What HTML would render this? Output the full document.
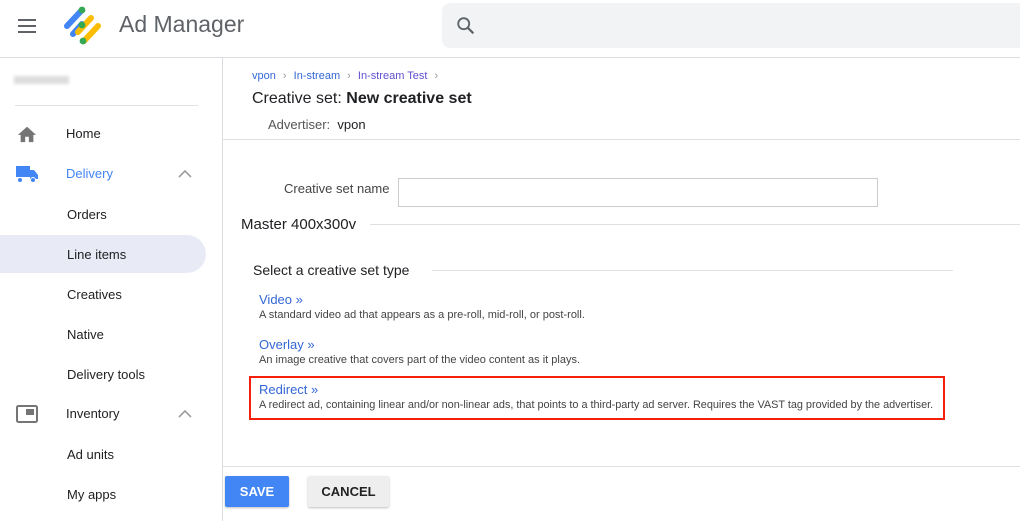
<!DOCTYPE html><html><head><style>
*{box-sizing:border-box;margin:0;padding:0}
body{width:1020px;height:521px;overflow:hidden;background:#fff;font-family:"Liberation Sans",Arial,sans-serif;color:#202124;position:relative}
.a{position:absolute;white-space:nowrap}
.nav{font-size:13px;color:#202124;left:66px}
.desc{font-size:11px;color:#444;left:259px}
.lk{font-size:13px;color:#3367d6;left:259px}
</style></head><body>
<div class="a" style="left:0;top:57px;width:1020px;border-top:1px solid #dadce0"></div>
<div class="a" style="left:18px;top:19px;width:18px;height:2px;background:#5f6368;box-shadow:0 6px 0 #5f6368,0 12px 0 #5f6368"></div>
<svg class="a" style="left:60px;top:4px" width="46" height="44" viewBox="0 0 46 44">
<line x1="22" y1="6" x2="7" y2="22" stroke="#4285f4" stroke-width="6" stroke-linecap="round"/>
<line x1="22" y1="20" x2="13" y2="30" stroke="#4285f4" stroke-width="6" stroke-linecap="round"/>
<line x1="31" y1="14" x2="18" y2="28" stroke="#fbbc04" stroke-width="6" stroke-linecap="round"/>
<line x1="38" y1="22" x2="24" y2="37" stroke="#fbbc04" stroke-width="6" stroke-linecap="round"/>
<circle cx="22" cy="6" r="3.4" fill="#34a853"/><circle cx="22" cy="21" r="3.4" fill="#34a853"/><circle cx="23" cy="37" r="3.4" fill="#34a853"/>
</svg>
<div class="a" style="left:119px;top:11px;font-size:23px;color:#5f6368">Ad Manager</div>
<div class="a" style="left:442px;top:3px;width:578px;height:45px;background:#f1f3f4;border-radius:8px 0 0 8px"></div>
<svg class="a" style="left:455px;top:15px" width="22" height="22" viewBox="0 0 24 24"><circle cx="9.5" cy="9.5" r="6" fill="none" stroke="#5f6368" stroke-width="2"/><line x1="14" y1="14" x2="20" y2="20" stroke="#5f6368" stroke-width="2.4"/></svg>
<div class="a" style="left:222px;top:57px;height:464px;border-left:1px solid #dadce0"></div>
<div class="a" style="left:14px;top:76px;width:55px;height:8px;background:#ddd;filter:blur(1.5px)"></div>
<div class="a" style="left:15px;top:105px;width:183px;border-top:1px solid #e0e0e0"></div>
<div class="a" style="left:0;top:235px;width:206px;height:38px;background:#e8eaf6;border-radius:0 19px 19px 0"></div>
<svg class="a" style="left:16px;top:124px" width="22" height="20" viewBox="0 0 24 22"><path d="M10 20v-6h4v6h5v-8h3L12 3 2 12h3v8z" fill="#757575"/></svg>
<svg class="a" style="left:15px;top:165px" width="24" height="18" viewBox="0 0 24 18"><path d="M1 1h14v11H1z M15 5h4l4 5v4h-8z" fill="#4285f4"/><circle cx="5" cy="15" r="2.5" fill="#4285f4" stroke="#fff"/><circle cx="18" cy="15" r="2.5" fill="#4285f4" stroke="#fff"/></svg>
<svg class="a" style="left:16px;top:405px" width="22" height="18" viewBox="0 0 22 18"><rect x="1" y="1" width="20" height="16" rx="1.5" fill="none" stroke="#757575" stroke-width="2"/><rect x="10" y="4" width="8" height="6" fill="#757575"/></svg>
<svg class="a" style="left:178px;top:169px" width="14" height="10"><path d="M1 8l6-6 6 6" fill="none" stroke="#9e9e9e" stroke-width="1.6"/></svg>
<svg class="a" style="left:178px;top:409px" width="14" height="10"><path d="M1 8l6-6 6 6" fill="none" stroke="#9e9e9e" stroke-width="1.6"/></svg>
<div class="a nav" style="top:126px">Home</div>
<div class="a nav" style="top:166px;color:#4285f4">Delivery</div>
<div class="a nav" style="top:207px;left:67px">Orders</div>
<div class="a nav" style="top:247px;left:67px">Line items</div>
<div class="a nav" style="top:287px;left:67px">Creatives</div>
<div class="a nav" style="top:327px;left:67px">Native</div>
<div class="a nav" style="top:367px;left:67px">Delivery tools</div>
<div class="a nav" style="top:406px">Inventory</div>
<div class="a nav" style="top:447px;left:67px">Ad units</div>
<div class="a nav" style="top:487px;left:67px">My apps</div>
<div class="a" style="left:252px;top:70px;font-size:11px;color:#3367d6">vpon <span style="color:#999;margin:0 4px">›</span> In-stream <span style="color:#999;margin:0 4px">›</span> <span style="color:#5e4fd0">In-stream Test</span> <span style="color:#999;margin:0 4px">›</span></div>
<div class="a" style="left:252px;top:90px;font-size:16px">Creative set: <b>New creative set</b></div>
<div class="a" style="left:268px;top:117px;font-size:13px;color:#555">Advertiser: <span style="color:#202124">&nbsp;vpon</span></div>
<div class="a" style="left:223px;top:139px;width:797px;border-top:1px solid #e0e0e0"></div>
<div class="a" style="left:284px;top:181px;font-size:13px;color:#444">Creative set name</div>
<div class="a" style="left:398px;top:178px;width:480px;height:29px;border:1px solid #ccc"></div>
<div class="a" style="left:241px;top:216px;font-size:15px">Master 400x300v</div>
<div class="a" style="left:370px;top:224px;width:650px;border-top:1px solid #e0e0e0"></div>
<div class="a" style="left:253px;top:262px;font-size:14px">Select a creative set type</div>
<div class="a" style="left:432px;top:270px;width:521px;border-top:1px solid #e0e0e0"></div>
<div class="a lk" style="top:292px">Video »</div>
<div class="a desc" style="top:309px">A standard video ad that appears as a pre-roll, mid-roll, or post-roll.</div>
<div class="a lk" style="top:337px">Overlay »</div>
<div class="a desc" style="top:354px">An image creative that covers part of the video content as it plays.</div>
<div class="a" style="left:249px;top:376px;width:696px;height:44px;border:2px solid #f4200c"></div>
<div class="a lk" style="top:382px">Redirect »</div>
<div class="a desc" style="top:399px;letter-spacing:-0.02px;font-size:10.9px">A redirect ad, containing linear and/or non-linear ads, that points to a third-party ad server. Requires the VAST tag provided by the advertiser.</div>
<div class="a" style="left:223px;top:466px;width:797px;border-top:1px solid #e0e0e0"></div>
<div class="a" style="left:225px;top:476px;width:64px;height:31px;background:#4285f4;border-radius:2px;color:#fff;font-size:13px;font-weight:bold;text-align:center;line-height:31px;box-shadow:0 1px 2px rgba(0,0,0,.25)">SAVE</div>
<div class="a" style="left:308px;top:476px;width:81px;height:31px;background:#eee;border-radius:2px;color:#222;font-size:13px;font-weight:bold;text-align:center;line-height:31px;box-shadow:0 1px 2px rgba(0,0,0,.25)">CANCEL</div>
</body></html>
